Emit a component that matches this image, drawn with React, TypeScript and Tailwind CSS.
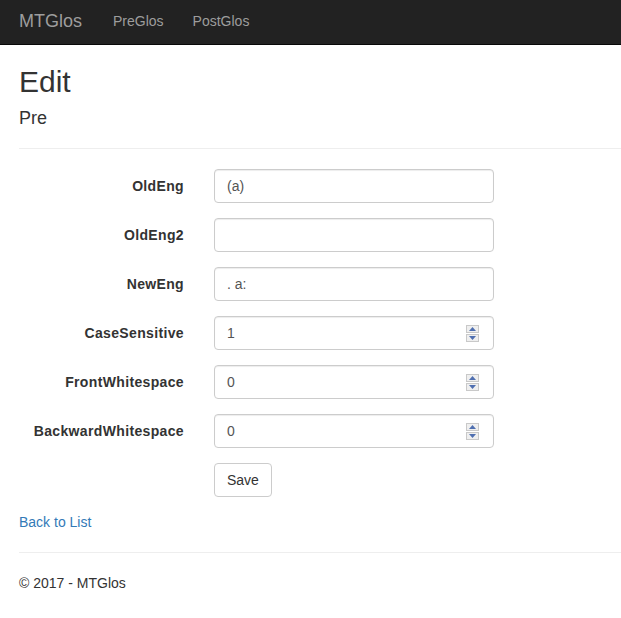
import React from "react";

const font = { fontFamily: '"Liberation Sans", Arial, Helvetica, sans-serif' };

function Spinner() {
  return (
    <div className="absolute right-[14px] top-[8px] flex h-[17px] w-[13px] flex-col">
      <div className="flex h-[8px] w-full items-center justify-center border border-[#c9c9c9] bg-[#efefef]">
        <svg width="7" height="4" viewBox="0 0 7 4">
          <polygon points="3.5,0 7,4 0,4" fill="#4f6fb0" />
        </svg>
      </div>
      <div className="mt-[1px] flex h-[8px] w-full items-center justify-center border border-[#c9c9c9] bg-[#efefef]">
        <svg width="7" height="4" viewBox="0 0 7 4">
          <polygon points="0,0 7,0 3.5,4" fill="#4f6fb0" />
        </svg>
      </div>
    </div>
  );
}

function Row({ label, value, number }: { label: string; value: string; number?: boolean }) {
  return (
    <div className="flex items-center">
      <label className="w-[165px] text-right text-[14px] font-bold leading-[20px] tracking-[0.35px] text-[#333]">{label}</label>
      <div className="relative ml-[30px] h-[34px] w-[280px] rounded-[4px] border border-[#ccc] bg-white px-[12px] py-[6px] text-[14px] leading-[20px] text-[#555] shadow-[inset_0_1px_1px_rgba(0,0,0,0.075)]">
        <span>{value}</span>
        {number && <Spinner />}
      </div>
    </div>
  );
}

export default function App() {
  return (
    <div className="min-h-[618px] bg-white text-[14px] text-[#333]" style={font}>
      <nav className="flex h-[45px] items-start border-b border-[#080808] bg-[#222] pl-[19px] pt-[11px]">
        <span className="text-[18px] leading-[20px] text-[#9d9d9d]">MTGlos</span>
        <span className="ml-[31px] text-[14px] leading-[20px] text-[#9d9d9d]">PreGlos</span>
        <span className="ml-[29px] text-[14px] leading-[20px] text-[#9d9d9d]">PostGlos</span>
      </nav>
      <div className="pl-[19px]">
        <h2 className="mt-[20px] text-[30px] font-normal leading-[33px] text-[#333]">Edit</h2>
        <h4 className="mt-[10px] text-[18px] font-normal leading-[20px] text-[#333]">Pre</h4>
        <hr className="mt-[20px] border-t border-[#eee]" />
        <div className="mt-[20px] flex flex-col gap-[15px]">
          <Row label="OldEng" value="(a)" />
          <Row label="OldEng2" value="" />
          <Row label="NewEng" value=". a:" />
          <Row label="CaseSensitive" value="1" number />
          <Row label="FrontWhitespace" value="0" number />
          <Row label="BackwardWhitespace" value="0" number />
          <div className="flex">
            <button className="ml-[195px] h-[34px] rounded-[4px] border border-[#ccc] bg-white px-[12px] text-[14px] leading-[20px] text-[#333]">
              Save
            </button>
          </div>
        </div>
        <div className="mt-[15px] leading-[20px]">
          <a className="text-[#337ab7]">Back to List</a>
        </div>
        <hr className="mt-[20px] border-t border-[#eee]" />
        <p className="mt-[20px] leading-[20px]">© 2017 - MTGlos</p>
      </div>
    </div>
  );
}
